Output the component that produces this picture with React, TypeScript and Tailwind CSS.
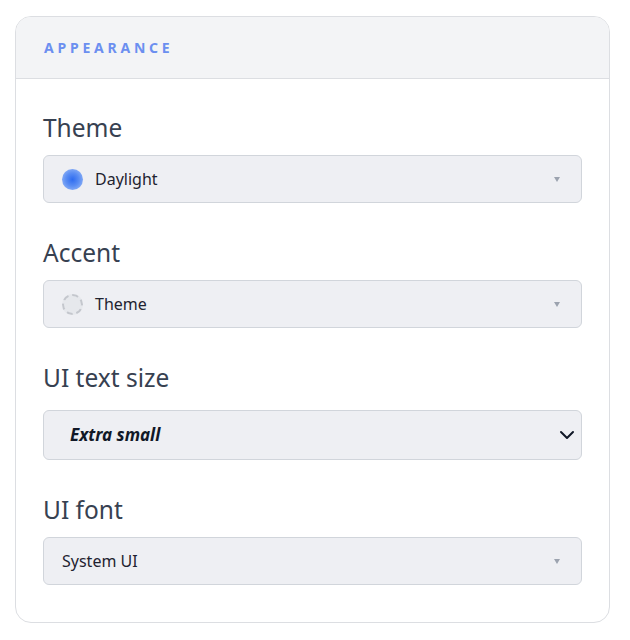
import React from "react";

const Caret = () => (
  <svg width="6" height="5" viewBox="0 0 6 5" className="shrink-0">
    <path d="M0 0 H6 L3 5 Z" fill="#9ca3af" />
  </svg>
);

function Field({ label, children, mb = "mb-[11px]" }: { label: string; children: React.ReactNode; mb?: string }) {
  return (
    <div>
      <div className={`text-[24.5px] leading-[32px] text-[#374151] ${mb}`}>{label}</div>
      {children}
    </div>
  );
}

function Box({ children }: { children: React.ReactNode }) {
  return (
    <div className="h-[48px] flex items-center rounded-[6px] border border-[#d1d5db] bg-[#eeeff3] pl-[18px] pr-[21px]">
      {children}
    </div>
  );
}

export default function App() {
  return (
    <div className="min-h-[640px] bg-white pt-[16px] px-[15px] font-['Noto_Sans','Open_Sans',sans-serif]">
      <div className="w-[595px] overflow-hidden rounded-[16px] border border-[#dcdee2] bg-white">
        <div className="h-[62px] flex items-center border-b border-[#dcdee2] bg-[#f3f4f6] px-[28px]">
          <span className="text-[14px] font-bold tracking-[0.27em] text-[#6b8ff0]">APPEARANCE</span>
        </div>
        <div className="flex flex-col gap-[34px] px-[27px] pt-[33px] pb-[37px]">
          <Field label="Theme">
            <Box>
              <span
                className="h-[21px] w-[21px] rounded-full shrink-0"
                style={{ background: "radial-gradient(circle, #2f6cf0 0%, #5b8ef3 45%, #a9c4f7 100%)" }}
              />
              <span className="ml-[12px] text-[16px] text-[#1f2330] flex-1">Daylight</span>
              <Caret />
            </Box>
          </Field>
          <Field label="Accent">
            <Box>
              <span className="h-[21px] w-[21px] rounded-full shrink-0 border-2 border-dashed border-[#c4c7cd] bg-[#e6e8ec]" />
              <span className="ml-[12px] text-[16px] text-[#1f2330] flex-1">Theme</span>
              <Caret />
            </Box>
          </Field>
          <Field label="UI text size" mb="mb-[16px]">
            <div className="h-[50px] flex items-center rounded-[6px] border border-[#d1d5db] bg-[#eeeff3] pl-[26px] pr-[6px]">
              <span className="flex-1 text-[17px] font-bold italic text-[#111827]">Extra small</span>
              <svg width="16" height="16" viewBox="0 0 16 16" className="shrink-0">
                <path d="M2 5 L8 11 L14 5" fill="none" stroke="#111827" strokeWidth="2" strokeLinecap="round" strokeLinejoin="round" />
              </svg>
            </div>
          </Field>
          <Field label="UI font">
            <Box>
              <span className="text-[16px] text-[#1f2330] flex-1">System UI</span>
              <Caret />
            </Box>
          </Field>
        </div>
      </div>
    </div>
  );
}
